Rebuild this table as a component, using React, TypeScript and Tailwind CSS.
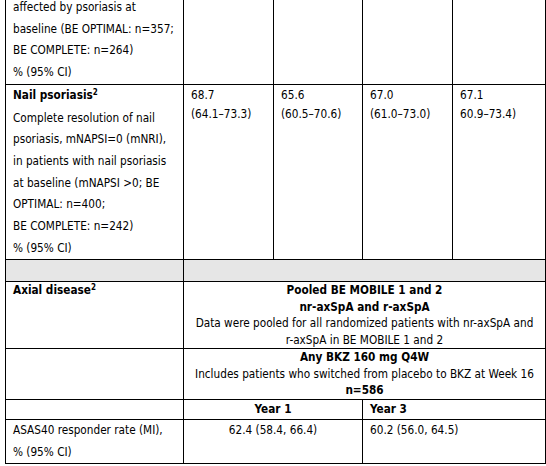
const cell = "border border-black align-top px-[7px]"

export default function App() {
  return (
    <div className="w-[546px] h-[466px] overflow-hidden bg-white text-black font-['DejaVu_Sans_Condensed','DejaVu_Sans',sans-serif] text-[11.7px]">
      <div className="-mt-[3px] pl-[5px]">
        <table className="w-[540px] table-fixed border-collapse">
          <colgroup>
            <col className="w-[178px]" />
            <col className="w-[90px]" />
            <col className="w-[89px]" />
            <col className="w-[90px]" />
            <col className="w-[93px]" />
          </colgroup>
          <tbody>
            {/* end of the psoriasis row above */}
            <tr>
              <td className={`${cell} border-t-0 leading-[21.7px]`}>
                affected by psoriasis at
                <br />
                baseline (BE OPTIMAL: n=357;
                <br />
                BE COMPLETE: n=264)
                <br />% (95% CI)
              </td>
              <td className={`${cell} border-t-0`} />
              <td className={`${cell} border-t-0`} />
              <td className={`${cell} border-t-0`} />
              <td className={`${cell} border-t-0`} />
            </tr>

            <tr>
              <td className={`${cell} leading-[21.7px]`}>
                <div className="font-bold mb-[1px]">
                  Nail psoriasis<sup className="text-[8px] leading-none">2</sup>
                </div>
                <div>
                  Complete resolution of nail
                  <br />
                  psoriasis, mNAPSI=0 (mNRI),
                  <br />
                  in patients with nail psoriasis
                  <br />
                  at baseline (mNAPSI &gt;0; BE
                  <br />
                  OPTIMAL: n=400;
                  <br />
                  BE COMPLETE: n=242)
                  <br />% (95% CI)
                </div>
              </td>
              <td className={`${cell} leading-[19px] pt-[1px]`}>
                68.7
                <br />
                (64.1–73.3)
              </td>
              <td className={`${cell} leading-[19px] pt-[1px]`}>
                65.6
                <br />
                (60.5–70.6)
              </td>
              <td className={`${cell} leading-[19px] pt-[1px]`}>
                67.0
                <br />
                (61.0–73.0)
              </td>
              <td className={`${cell} leading-[19px] pt-[1px]`}>
                67.1
                <br />
                60.9–73.4)
              </td>
            </tr>

            <tr className="bg-[#e6e6e6]">
              <td className={`${cell} h-[22px]`} />
              <td className={cell} colSpan={4} />
            </tr>

            <tr>
              <td className={`${cell} leading-[16.6px] font-bold`}>
                Axial disease<sup className="text-[8px] leading-none">2</sup>
              </td>
              <td className={`${cell} leading-[16.4px] text-center`} colSpan={4}>
                <div className="font-bold">Pooled BE MOBILE 1 and 2</div>
                <div className="font-bold">nr-axSpA and r-axSpA</div>
                <div>
                  Data were pooled for all randomized patients with nr-axSpA and
                  <br />
                  r-axSpA in BE MOBILE 1 and 2
                </div>
              </td>
            </tr>

            <tr>
              <td className={cell} />
              <td className={`${cell} leading-[16.6px] text-center`} colSpan={4}>
                <div className="font-bold">Any BKZ 160 mg Q4W</div>
                <div>Includes patients who switched from placebo to BKZ at Week 16</div>
                <div className="font-bold">n=586</div>
              </td>
            </tr>

            <tr className="leading-[19px] font-bold">
              <td className={cell} />
              <td className={`${cell} text-center`} colSpan={2}>
                Year 1
              </td>
              <td className={cell} colSpan={2}>
                Year 3
              </td>
            </tr>

            <tr className="leading-[21.7px]">
              <td className={cell}>
                ASAS40 responder rate (MI),
                <br />% (95% CI)
              </td>
              <td className={`${cell} text-center`} colSpan={2}>
                62.4 (58.4, 66.4)
              </td>
              <td className={cell} colSpan={2}>
                60.2 (56.0, 64.5)
              </td>
            </tr>
          </tbody>
        </table>
      </div>
    </div>
  )
}
